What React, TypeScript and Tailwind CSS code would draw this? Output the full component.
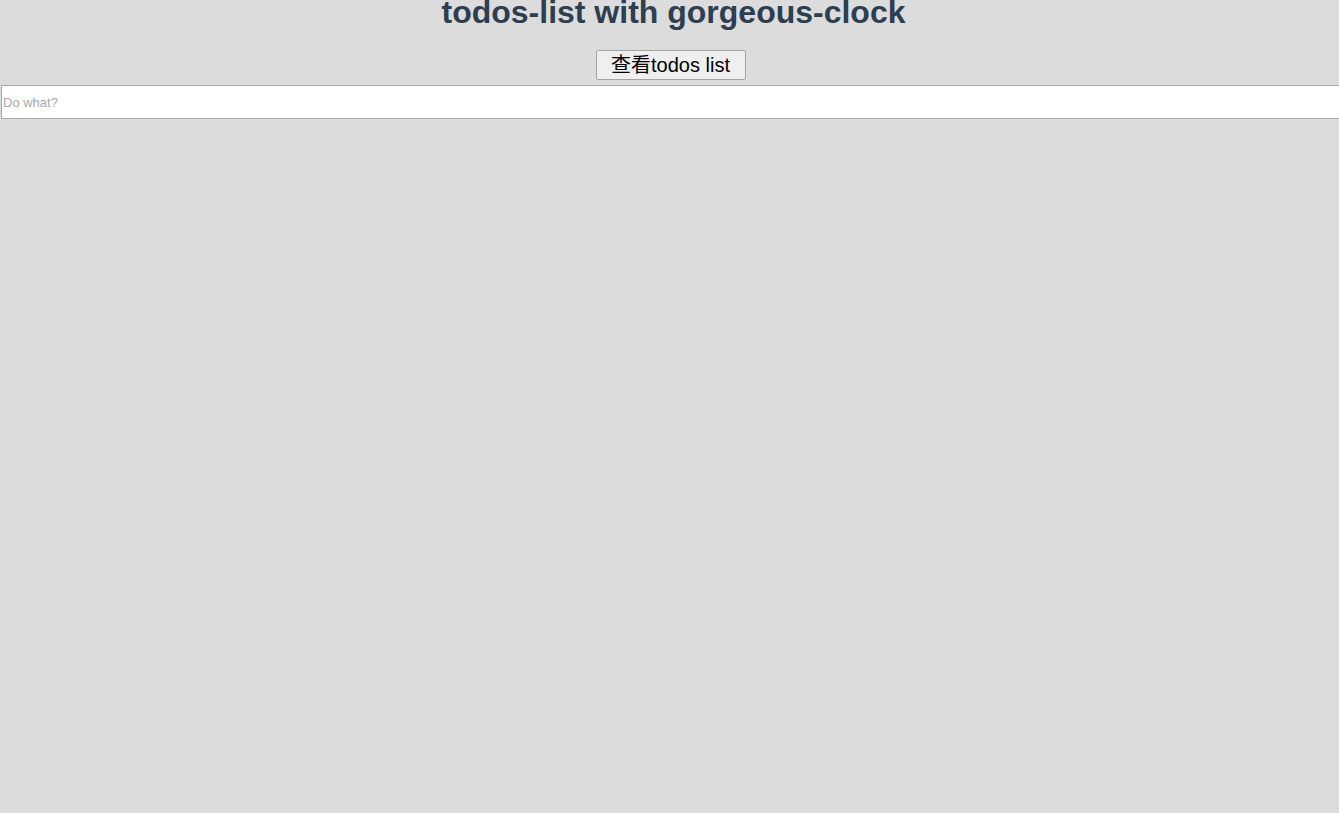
import React from "react";

export default function App() {
  return (
    <div className="min-h-[813px] w-full overflow-hidden bg-[#dcdcdc] font-['Liberation_Sans','Noto_Sans_CJK_SC',sans-serif]">
      <h1 className="mt-[-6px] pl-[8px] text-center text-[32px] font-bold leading-[37px] text-[#2c3e50]">
        todos-list with gorgeous-clock
      </h1>
      <div className="mt-[19px] flex justify-center pl-[2px]">
        <button className="h-[30px] w-[150px] rounded-[2px] border border-[#a3a3a3] bg-[#efefef] text-[20px] leading-none text-black">
          查看todos list
        </button>
      </div>
      <div className="mt-[5px] pl-px">
        <input
          className="block h-[34px] w-[1360px] border border-[#a9a9a9] bg-white px-[1px] text-[13px] text-black outline-none placeholder:text-[#a9a9a9]"
          placeholder="Do what?"
        />
      </div>
    </div>
  );
}
